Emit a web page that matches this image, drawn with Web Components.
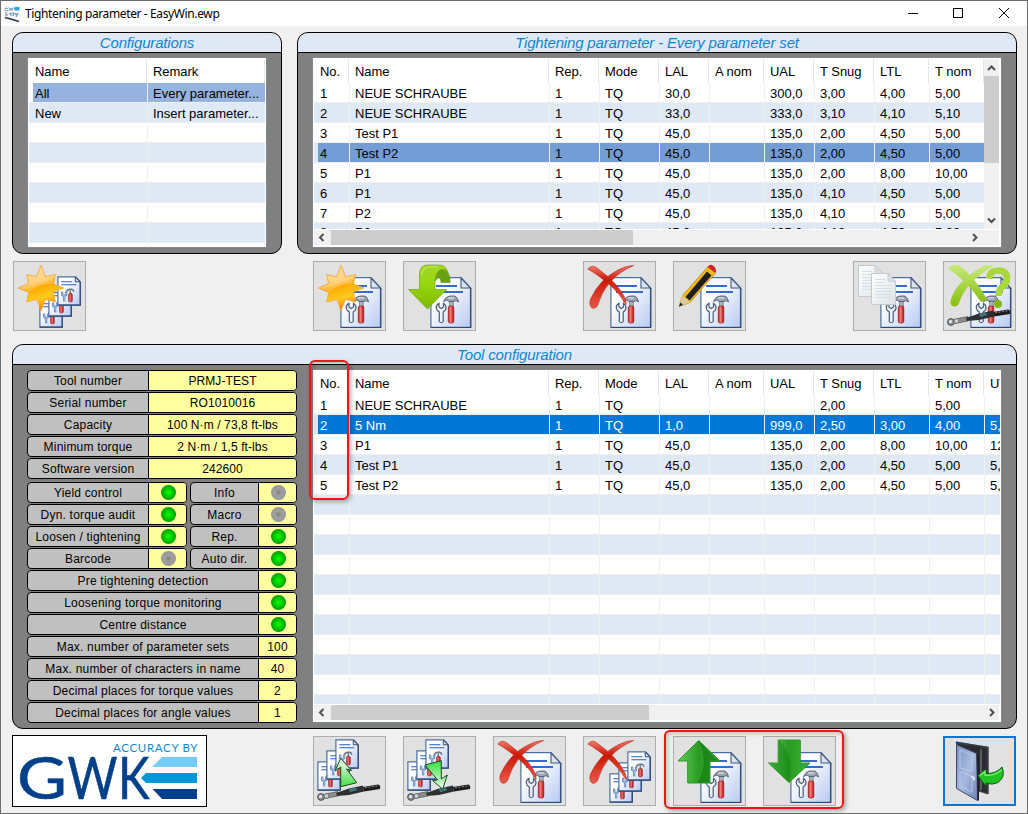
<!DOCTYPE html>
<html lang="en">
<head>
<meta charset="utf-8">
<title>Tightening parameter - EasyWin.ewp</title>
<style>
html,body{margin:0;height:100%;overflow:hidden}
body{font:13px "Liberation Sans",Arial,sans-serif;color:#000;background:#f0f0f0}
.top{display:flex;gap:15px;padding:6px 0 0 11px}
.bar{display:flex;gap:17px;padding:7px 0 0 12px}
.gap1{width:193px}.gap2{width:73px}
.tool{padding:13px 0 0 11px}
.cfg{display:flex;gap:16px}
.specs{display:flex;flex-direction:column;gap:1px;width:270px}
.pair{display:flex;gap:3px}
.flags{margin-top:2px;display:flex;flex-direction:column;gap:1px}
</style>
</head>
<body>
<ewp-window caption="Tightening parameter - EasyWin.ewp">
  <div class="top">
    <ewp-panel caption="Configurations" style="width:270px;height:222px">
      <ewp-table style="width:238px;height:189px" id="t1"></ewp-table>
    </ewp-panel>
    <ewp-panel caption="Tightening parameter - Every parameter set" style="width:720px;height:222px">
      <ewp-table style="width:688px;height:189px" id="t2"></ewp-table>
    </ewp-panel>
  </div>
  <div class="bar">
    <ewp-button icon="newset"></ewp-button><span class="gap1"></span>
    <ewp-button icon="new"></ewp-button><ewp-button icon="insert"></ewp-button><span class="gap2"></span>
    <ewp-button icon="delete"></ewp-button><ewp-button icon="edit"></ewp-button><span class="gap2"></span>
    <ewp-button icon="copy"></ewp-button><ewp-button icon="check"></ewp-button>
  </div>
  <div class="tool">
    <ewp-panel caption="Tool configuration" style="width:1005px;height:385px">
      <div class="cfg">
        <div class="specs">
          <ewp-spec label="Tool number" value="PRMJ-TEST" split="121"></ewp-spec>
          <ewp-spec label="Serial number" value="RO1010016" split="121"></ewp-spec>
          <ewp-spec label="Capacity" value="100 N·m / 73,8 ft-lbs" split="121"></ewp-spec>
          <ewp-spec label="Minimum torque" value="2 N·m / 1,5 ft-lbs" split="121"></ewp-spec>
          <ewp-spec label="Software version" value="242600" split="121"></ewp-spec>
          <div class="flags">
            <div class="pair"><ewp-spec label="Yield control" led="on" split="121" style="width:160px"></ewp-spec><ewp-spec label="Info" led="off" split="68" style="width:107px"></ewp-spec></div>
            <div class="pair"><ewp-spec label="Dyn. torque audit" led="on" split="121" style="width:160px"></ewp-spec><ewp-spec label="Macro" led="off" split="68" style="width:107px"></ewp-spec></div>
            <div class="pair"><ewp-spec label="Loosen / tightening" led="on" split="121" style="width:160px"></ewp-spec><ewp-spec label="Rep." led="on" split="68" style="width:107px"></ewp-spec></div>
            <div class="pair"><ewp-spec label="Barcode" led="off" split="121" style="width:160px"></ewp-spec><ewp-spec label="Auto dir." led="on" split="68" style="width:107px"></ewp-spec></div>
            <ewp-spec label="Pre tightening detection" led="on" split="231"></ewp-spec>
            <ewp-spec label="Loosening torque monitoring" led="on" split="231"></ewp-spec>
            <ewp-spec label="Centre distance" led="on" split="231"></ewp-spec>
            <ewp-spec label="Max. number of parameter sets" value="100" split="231"></ewp-spec>
            <ewp-spec label="Max. number of characters in name" value="40" split="231"></ewp-spec>
            <ewp-spec label="Decimal places for torque values" value="2" split="231"></ewp-spec>
            <ewp-spec label="Decimal places for angle values" value="1" split="231"></ewp-spec>
          </div>
        </div>
        <ewp-table style="width:688px;height:352px" id="t3"></ewp-table>
      </div>
    </ewp-panel>
  </div>
  <div class="bar" style="padding:6px 0 0 11px;gap:0">
    <ewp-logo></ewp-logo>
    <div class="bar" style="padding:1px 0 0 106px">
      <ewp-button icon="read"></ewp-button><ewp-button icon="write"></ewp-button>
      <ewp-button icon="delete"></ewp-button><ewp-button icon="deleteall"></ewp-button>
      <ewp-button icon="up"></ewp-button><ewp-button icon="down"></ewp-button><span class="gap2"></span>
      <ewp-button icon="exit" focused></ewp-button>
    </div>
  </div>
  <ewp-mark slot="marks" style="left:309px;top:360px;width:40px;height:140px"></ewp-mark>
  <ewp-mark slot="marks" style="left:664px;top:730px;width:180px;height:79px"></ewp-mark>
</ewp-window>
<script>
function shadow(el, html){ el.attachShadow({mode:'open'}).innerHTML = html; return el.shadowRoot; }

class EwpWindow extends HTMLElement{
  connectedCallback(){
    shadow(this, `<style>
      :host{display:flex;flex-direction:column;position:relative;box-sizing:border-box;width:1028px;height:814px;border:1px solid #6b6b6b;background:#f0f0f0}
      header{display:flex;align-items:center;height:25px;background:#fff;flex:none}
      .ico{margin-left:3px}
      h1{margin:0 auto 0 5px;font:12px/25px "Noto Sans","Open Sans",sans-serif;letter-spacing:-.38px;white-space:pre}
      .ctl{display:block}
    </style>
    <header>
      <svg class="ico" width="16" height="16" viewBox="0 0 16 16"><rect width="16" height="16" fill="#f4f7fa"/>
        <path d="M4 2.500Q1 1 .8 3.500T4 4.500V3.800M5 1.500l1 3 1-2.500 1 2.500 1-3" fill="none" stroke="#7f9fc4"/><path d="M11 1h4.500v3.600H11l-1.200-1.800z" fill="#2aa3e0"/>
        <path d="M1 7h2M1 9h3M5 8l2-1v3M8 7h2l-1 3M11 7l1 2 2-2-2 4" fill="none" stroke="#5c88b4"/><path d="M1 11.500l4 1 10 3" fill="none" stroke="#333" stroke-width="1.500"/></svg>
      <h1>${this.getAttribute('caption')}</h1>
      <svg class="ctl" width="120" height="25" viewBox="0 0 120 25" fill="none" stroke="#000" shape-rendering="crispEdges"><path d="M1 12.500h10M46.500 7.500h9v9h-9z"/><path d="M92 7l10 10M102 7l-10 10" shape-rendering="auto"/></svg>
    </header>
    <slot></slot><slot name="marks"></slot>`);
  }
}
class EwpPanel extends HTMLElement{
  connectedCallback(){
    shadow(this, `<style>
      :host{display:flex;flex-direction:column;box-sizing:border-box;border:1px solid #000;border-radius:11px;background:#808080;overflow:hidden}
      h2{margin:0;height:19px;flex:none;border-bottom:1px solid #000;background:#dfe9f5;color:#0f86cc;font:italic 15px/20px "Liberation Sans",Arial,sans-serif;letter-spacing:-.17px;text-align:center;white-space:pre}
      div{padding:5px 0 0 15px}
      :host([caption="Tool configuration"]) div{padding-left:14px}
    </style><h2>${this.getAttribute('caption')}</h2><div><slot></slot></div>`);
  }
}
class EwpTable extends HTMLElement{
  connectedCallback(){
    const d = TABLES[this.id];
    const cells = (r,t)=>d.widths.map((x,i)=>`<${t} style="width:${x}px">${r[i]||''}</${t}>`).join('');
    let rows='';
    for(let i=0;i<d.count;i++) rows += `<div class="row${d.sel===i?' sel':''}">${cells(d.rows[i]||[],'b')}</div>`;
    const arrow = p=>`<svg width="17" height="17" viewBox="0 0 17 17"><path d="${p}" fill="none" stroke="#505050" stroke-width="2"/></svg>`;
    shadow(this, `<style>
      :host{display:flex;flex-direction:column;box-sizing:border-box;background:#fff;padding:1px;font-size:13px;outline:1px solid #828790}
      .view{display:flex;flex:1;min-height:0}
      .grid{flex:1;min-width:0;overflow:hidden}
      .head,.row{display:flex}
      i,b{display:block;flex:none;box-sizing:border-box;font:inherit;white-space:pre;overflow:hidden}
      i{height:24px;line-height:25px;padding-left:6px;border-right:1px solid #e5e5e5;margin:0 1px 0 -1px;letter-spacing:-.03px}
      i:first-child{padding-left:7px}
      b{height:20px;line-height:21px;padding-left:5px;border-right:1px solid #f0f0f0;border-bottom:1px solid #f0f0f0}
      b:first-child{padding-left:6px}
      .row{--base:#fff}
      .row:nth-child(odd){--base:#dfe9f5;background:#dfe9f5}
      .row.sel b{background:${d.color};color:${d.ink}}
      .row.sel b:first-child{background:linear-gradient(90deg,var(--base) 4px,${d.color} 4px)}
      .cut b{line-height:19px}
      .v{width:16px;background:linear-gradient(90deg,#f0f0f0 15px,#fff 15px);display:flex;flex-direction:column}
      .v svg{margin-left:-1px}
      .v em{height:87px;width:15px;background:#cdcdcd}
      .v svg:last-child{margin-top:auto}
      .h{margin:1px 1px 1px 0;height:15px;background:#f0f0f0;display:flex}
      .h em{background:#cdcdcd;height:15px}
      .h svg{margin:-1px 0 0 -1px}
      .h em{margin-left:1px}
      .h svg:last-child{margin-left:auto;margin-right:${d.v?15:-2}px}
    </style>
    <div class="view"><div class="grid"><div class="head">${cells(d.cols,'i')}</div>${rows}</div>
    ${d.v?`<div class="v">${arrow('M5 11l3.5-3.5L12 11')}<em></em>${arrow('M5 6.5L8.5 10 12 6.5')}</div>`:''}</div>
    ${d.h?`<div class="h">${arrow('M10.5 5L7 8.5l3.5 3.5')}<em style="width:${d.h}px"></em>${arrow('M6 5l3.5 3.5L6 12')}</div>`:''}`);
    if(d.v) this.shadowRoot.querySelector('.grid').lastElementChild.classList.add('cut');
  }
}
class EwpSpec extends HTMLElement{
  connectedCallback(){
    const led=this.getAttribute('led');
    const c = led==='on'?['#00ff00','#00d000','#009a00']:['#808080','#a0a0a0','#979797'];
    shadow(this, `<style>
      :host{display:flex;box-sizing:border-box;width:270px;height:21px;border:1px solid #000;border-radius:4px;overflow:hidden;background:#c0c0c0;font-size:12px;line-height:21px;letter-spacing:.2px;white-space:pre;text-align:center}
      .l{width:${this.getAttribute('split')-1}px;flex:none;border-right:1px solid #000}
      .r{flex:1;height:19px;background:#ffff9f;letter-spacing:.1px}
      svg{display:block;margin:2px auto 0;position:relative;left:.5px}
    </style><div class="l">${this.getAttribute('label')}</div>
    <div class="r">${led?`<svg width="15" height="15"><defs><radialGradient id="g"><stop offset="0" stop-color="${c[0]}"/><stop offset=".5" stop-color="${c[1]}"/><stop offset="1" stop-color="${c[2]}"/></radialGradient></defs><circle cx="7.500" cy="7.500" r="7.500" fill="url(#g)"/></svg>`:this.getAttribute('value')}</div>`);
  }
}
class EwpMark extends HTMLElement{
  connectedCallback(){
    shadow(this, `<style>:host{display:block;position:absolute;margin:-1px 0 0 -1px;box-sizing:border-box;border:2px solid #f21414;border-radius:6px;box-shadow:2px 2px 4px rgba(0,0,0,.3),inset 2px 2px 4px rgba(0,0,0,.18)}</style>`);
  }
}
class EwpLogo extends HTMLElement{
  connectedCallback(){
    shadow(this, `<style>:host{display:block;box-sizing:border-box;width:195px;height:72px;border:1px solid #000;background:#fff}svg{display:block}</style>
    <svg width="193" height="70" viewBox="13 736 193 70">
      <text x="113" y="751.500" font-family="Lato" font-size="11.500" fill="#1787cb" textLength="84.500">ACCURACY BY</text>
      <g font-family="Lato" font-size="58" fill="#00408a" stroke="#00408a" stroke-width=".6">
      <text x="17" y="799" textLength="50" lengthAdjust="spacingAndGlyphs">G</text>
      <text x="67.500" y="799" textLength="50" lengthAdjust="spacingAndGlyphs">W</text>
      <text x="118" y="799" textLength="31.500" lengthAdjust="spacingAndGlyphs">K</text></g>
      <path d="M162 757h35v10h-45z" fill="#74cbf5"/><path d="M146 773h51v10h-51l-5-5z" fill="#0096d8"/><path d="M152.500 789h44.500v10h-35z" fill="#00408a"/>
    </svg>`);
  }
}

const DEFS = `<defs>
<linearGradient id="pg" x1="0" y1="0" x2="1" y2="1"><stop offset=".3" stop-color="#fff"/><stop offset="1" stop-color="#b8caf2"/></linearGradient>
<linearGradient id="st" x1="0" y1="0" x2=".3" y2="1"><stop offset="0" stop-color="#ffe0a0"/><stop offset=".45" stop-color="#ffc860"/><stop offset=".55" stop-color="#ffa800"/><stop offset=".8" stop-color="#ffcb1e"/><stop offset="1" stop-color="#f58a10"/></linearGradient>
<linearGradient id="rd" x1="0" y1="0" x2="0" y2="1"><stop offset="0" stop-color="#f07a6c"/><stop offset=".35" stop-color="#cc1806"/><stop offset="1" stop-color="#ea5a4a"/></linearGradient>
<linearGradient id="rh"><stop offset="0" stop-color="#c81818"/><stop offset=".4" stop-color="#f08078"/><stop offset="1" stop-color="#b00c0c"/></linearGradient>
<linearGradient id="lg" x1="0" y1="0" x2="0" y2="1"><stop offset="0" stop-color="#a2d624"/><stop offset=".4" stop-color="#98d810"/><stop offset="1" stop-color="#7fb800"/></linearGradient>
<linearGradient id="yg" x1="0" y1="0" x2="0" y2="1"><stop offset="0" stop-color="#c8ea7c"/><stop offset="1" stop-color="#88bf10"/></linearGradient>
<linearGradient id="gg"><stop offset="0" stop-color="#62d05a"/><stop offset=".5" stop-color="#2a9a24"/><stop offset="1" stop-color="#3cb434"/></linearGradient>
<linearGradient id="ag" x1="0" y1="0" x2="0" y2="1"><stop offset="0" stop-color="#f0fbf0"/><stop offset=".4" stop-color="#b8efb8"/><stop offset="1" stop-color="#3fe03f"/></linearGradient>
<linearGradient id="bg" x1="0" y1="0" x2="0" y2="1"><stop offset="0" stop-color="#30e03a"/><stop offset="1" stop-color="#f4fcf4"/></linearGradient>
<linearGradient id="dr" x1="0" y1="0" x2="1" y2="1"><stop offset="0" stop-color="#7890c0"/><stop offset=".5" stop-color="#a8bae0"/><stop offset="1" stop-color="#7084b4"/></linearGradient>
<linearGradient id="cp" x1="0" y1="0" x2="1" y2="1"><stop offset="0" stop-color="#fff"/><stop offset="1" stop-color="#dfe4e6"/></linearGradient>
</defs>`;
const TOOLS = `<path d="M36 42.300Q33 44 33.300 47Q33.800 50 36.300 51V60.500Q38.200 63 40.200 60.500V51Q43 49.500 43 46.500Q43 44 40.500 42.300V46L38.200 47.500L36 46z" fill="#eef2f8" stroke="#4b5c78" stroke-width="1.200"/>
<path d="M46.500 40h3.800v6h-3.800z" fill="#a9b4c0" stroke="#56626e" stroke-width=".6"/>
<path d="M40.500 40.500Q43 35 47 35h5Q55 36.500 55.500 41L53 39.500 51 40.500H46L44 39z" fill="#9ba6b2" stroke="#4a545e" stroke-width=".8"/><path d="M45 37h6" stroke="#eef"/>
<rect x="45.300" y="45" width="5.500" height="17" rx="1.800" fill="url(#rh)" stroke="#a01414" stroke-width=".7"/>`;
const DOC = `<path d="M27.900 16.600H58L67.500 27V66.300H27.900z" fill="url(#pg)" stroke="#4d6f9f" stroke-width="1.200"/><path d="M67.800 27V66.500H28" fill="none" stroke="#2c4a78" stroke-width="1.200"/><path d="M58 17V27H67.500z" fill="#dce4ee" stroke="#405a80" stroke-width="1.100"/><path d="M33 25h21M33 31h27" stroke="#356ad2" stroke-width="2"/>${TOOLS}`;
const small = (x,y)=>`<g transform="translate(${x} ${y})"><path d="M.6.600H18.500L22.900 5.500V28.800H.6z" fill="url(#pg)" stroke="#4d6f9f" stroke-width="1.200"/><path d="M23 5.500V28.900H.6" fill="none" stroke="#2c4a78" stroke-width="1.200"/><path d="M18 1V5.500H22.700z" fill="#dce4ee" stroke="#304a70"/><path d="M4 5.500h11M4 8.500h15" stroke="#2560c0" stroke-width="1.100"/>
<path d="M4.800 15.500v3l2 1.500 2-1.500v-3M6.800 20v5" fill="none" stroke="#4a70b0" stroke-width="2.200"/><path d="M4.800 16v2.500l2 1.500 2-1.500V16M6.800 20v4.500" fill="none" stroke="#dbe8fa" stroke-width=".8"/><path d="M9 15.500q1-2.500 4-2.500h1.500q1.700.4 2 2.500M13 14v4" fill="none" stroke="#6a7480" stroke-width="1.500"/><rect x="11.300" y="17.300" width="3.700" height="8.200" rx="1" fill="url(#rh)" stroke="#9c1212" stroke-width=".6"/></g>`;
const SET = small(26.3,37.3)+small(35.3,26.3)+small(44.3,15.3);
const SETL = small(4.3,25.3)+small(13.3,14.3)+small(22.3,3.3);
const STAR = `<path d="M28 4L32.500 15.500 42.500 13.500 40.500 23 51 27 40.500 31 42.500 41 32.500 38.500 28 50 24 38.500 13.500 41 15.800 31.500 5 27 15.500 22.500 13.500 13.500 23.500 15.500z" fill="url(#st)" stroke="#f0a040" stroke-width=".7"/><path d="M16.500 31Q26 23 39 23L41 15 32 17 28 8 24 17 15 15 17 23.500 8 27z" fill="#fff" opacity=".2"/>`;
const CROSS = `<path d="M4.800 8Q9 3 14 7Q35 22 42 37Q43.500 41 43 43.500Q37 33 28 25Q14 13 4.800 8z" fill="url(#rd)" stroke="#c02818" stroke-width=".6"/><path d="M50.500 4.500Q36 11 27 21Q18 32 14.800 44Q13 48 9 47Q5.500 44 7.500 38Q17 18 34 9.500Q43 4.500 50.500 4.500z" fill="url(#rd)" stroke="#c02818" stroke-width=".6"/>`;
const wrench = y=>`<g transform="translate(0 ${y})"><path d="M12 57.500L25 55V59.500L12 62z" fill="#8a8e90" stroke="#444" stroke-width=".6"/><circle cx="8" cy="60.500" r="3.400" fill="#8e9294" stroke="#3a3a3a" stroke-width=".8"/><circle cx="7.500" cy="60" r="1.500" fill="#eee"/><path d="M11 58l4-1 .8 4-4 1z" fill="#d0d3d4" stroke="#555" stroke-width=".6"/><path d="M23 56.500L36 52l14-3 1 6-15 3.500-12 1z" fill="#2c3032"/><path d="M36 52.500l7-1.800 1 3-7 2z" fill="#3f7180"/><path d="M50 50.500L65 48Q68 48.500 67 52.500L51 55z" fill="#1c1c1c"/><path d="M52 51.300l13-2" stroke="#888" stroke-dasharray="2 1.500"/></g>`;
const ICONS = {
 newset: SET+STAR, new: DOC+STAR,
 insert: DOC+`<path d="M32.500 20Q34 8 39 6Q47 9 47.200 21.500H38Q37.500 15 34.500 17z" fill="#6ba010" stroke="#5f930a" stroke-width=".6"/><path d="M32 28.500V19Q32.500 11 38 8.500Q42 7.500 44.500 11Q43 4 36 4H24Q16.500 4 16.500 14V28.500H5.500L24.500 48 43.500 28.500z" fill="url(#lg)" stroke="#73a80a" stroke-width=".7"/><path d="M18.500 14Q19 7 25 6h10" fill="none" stroke="#c5ea70" stroke-width="1.200"/>`,
 delete: DOC+CROSS, deleteall: SET+CROSS,
 edit: DOC+`<path d="M6 45.500L9.500 34.500 35 5.500 42.500 12 17 41.500z" fill="#f2b81c" stroke="#a47812" stroke-width=".6"/><path d="M12.500 36L34 10.500 38.500 14.500 16.500 39.500z" fill="#202020"/><path d="M34.500 6Q37 2.500 40 4.500 44 7 42.500 12z" fill="#d41f26"/><path d="M6 45.500L9.500 34.500 17 41.500z" fill="#dccb98"/><path d="M6 45.500L7.500 41.500 10 44z" fill="#222"/>`,
 copy: DOC+[[5,4],[18,12]].map(([x,y])=>`<g transform="translate(${x} ${y})"><path d="M.5.500H17L24.500 8.500V31.500H.5z" fill="url(#cp)" stroke="#c4c9cc"/><path d="M17 .5V8.500H24.500z" fill="#dde1e4" stroke="#b8bec2" stroke-width=".6"/><path d="M4 6.500h10M4 9.500h10M4 12.500h17M4 15.500h17M4 18.500h17M4 21.500h17M4 24.500h17" stroke="#cfe0ea" stroke-width="1"/></g>`).join(''),
 check: DOC+`<path d="M4.500 7Q10 3 16 4Q32 16 44.500 39L38 41Q24 20 4.500 7z" fill="url(#yg)"/><path d="M51.500 4H42Q14 19 8 38 6 45 11 45.500 15 45.500 16 42Q22 22 51.500 4z" fill="url(#yg)"/><path d="M46 17.500Q47 9.500 55 9.500 64 9.500 64 17.500 64 22.500 59 26 55.500 29 55.500 35" fill="none" stroke="#a9d83c" stroke-width="6.500"/><circle cx="55" cy="43" r="4" fill="#82b911"/>`+wrench(.5),
 read: SETL+wrench(.5)+`<path d="M27.700 22.300L38.700 34.500 33.500 33 43.700 46.700 27.700 50.700V31L22 35z" fill="url(#ag)" stroke="#1c4a1c"/>`,
 write: SETL+wrench(.5)+`<path d="M22 29L38.300 24.700V43L44.300 39 39.700 53 29.700 44.700 34.500 44z" fill="url(#bg)" stroke="#1c4a1c"/>`,
 up: DOC+`<path d="M25.700 4.500L47 25H37V47H14.700V25H5z" fill="url(#gg)" stroke="#2a9a24"/><path d="M25.700 5Q36 25 25 46.500H36.500V24.500H45.500z" fill="#0c6e0c" opacity=".5"/>`,
 down: DOC+`<path d="M15.200 4H37.300V27H47L26 46.500 5.500 27H15.200z" fill="url(#gg)" stroke="#2a9a24"/><path d="M16 4.500Q32 18 26 46L6.500 27.500H15.700z" fill="#0b7a0b" opacity=".4"/>`,
 exit: `<path d="M13 6L44.700 11.500V58L35 55V64z" fill="#2a2b30" stroke="#555" stroke-width=".8"/><path d="M13 6.500L44.700 11.500V58" fill="none" stroke="#3a3c40" stroke-width="2"/><path d="M38 13v41" stroke="#5b5e63" stroke-width="2"/><path d="M13.500 8.500L33.700 17.500 34.500 64.500 13.500 52.500z" fill="url(#dr)" stroke="#3c4868"/><path d="M33.700 17.500l2.300 1V64.500H34.500" fill="#202228"/><path d="M17 14L29 19.500V35.500L17 32zM17 36L29 40V56L17 49.500z" fill="none" stroke="#c2d0ee" stroke-width=".8"/><path d="M28 40.500l3 1v3" stroke="#eee" stroke-width="1.500" fill="none"/><path d="M34.700 39.500L43 33V37.500Q53 38 59 31Q63 41 55 46.500 49 49.500 43 47V50.500z" fill="#1fc324" stroke="#0e5a10"/><path d="M37 39.300L42 35.500V39Q52 40 58.500 34" stroke="#79ee72" stroke-width="1.500" fill="none"/>`
};
class EwpButton extends HTMLElement{
  connectedCallback(){
    const f=this.hasAttribute('focused');
    shadow(this, `<style>:host{display:block;flex:none;box-sizing:border-box;width:73px;height:70px;background:#e1e1e1;box-shadow:inset 0 0 0 ${f?'2px #0078d7':'1px #adadad'}}svg{display:block}</style>
    <svg width="73" height="70" viewBox="0 0 73 70">${DEFS}${ICONS[this.getAttribute('icon')]}</svg>`);
  }
}
const W=[36,200,50,60,50,55,50,60,55,55];
const C=['No.','Name','Rep.','Mode','LAL','A nom','UAL','T Snug','LTL','T nom'];
const TABLES={
 t1:{cols:['Name','Remark'],widths:[119,118],count:9,sel:0,color:'#96b2df',ink:'#000',rows:[['All','Every parameter...'],['New','Insert parameter...']]},
 t2:{cols:C,widths:W,count:8,sel:3,color:'#749dd6',ink:'#000',v:1,h:302,rows:[
  ['1','NEUE SCHRAUBE','1','TQ','30,0','','300,0','3,00','4,00','5,00'],
  ['2','NEUE SCHRAUBE','1','TQ','33,0','','333,0','3,10','4,10','5,10'],
  ['3','Test P1','1','TQ','45,0','','135,0','2,00','4,50','5,00'],
  ['4','Test P2','1','TQ','45,0','','135,0','2,00','4,50','5,00'],
  ['5','P1','1','TQ','45,0','','135,0','2,00','8,00','10,00'],
  ['6','P1','1','TQ','45,0','','135,0','4,10','4,50','5,00'],
  ['7','P2','1','TQ','45,0','','135,0','4,10','4,50','5,00'],
  ['8','P2','1','TQ','45,0','','135,0','4,10','4,50','5,00']]},
 t3:{cols:[...C,'UTL'],widths:[...W,55],count:16,sel:1,color:'#0078d7',ink:'#fff',h:318,rows:[
  ['1','NEUE SCHRAUBE','1','TQ','','','','2,00','','5,00',''],
  ['2','5 Nm','1','TQ','1,0','','999,0','2,50','3,00','4,00','5,00'],
  ['3','P1','1','TQ','45,0','','135,0','2,00','8,00','10,00','12,00'],
  ['4','Test P1','1','TQ','45,0','','135,0','2,00','4,50','5,00','5,50'],
  ['5','Test P2','1','TQ','45,0','','135,0','2,00','4,50','5,00','5,50']]}
};
customElements.define('ewp-window',EwpWindow);
customElements.define('ewp-panel',EwpPanel);
customElements.define('ewp-table',EwpTable);
customElements.define('ewp-spec',EwpSpec);
customElements.define('ewp-mark',EwpMark);
customElements.define('ewp-logo',EwpLogo);
customElements.define('ewp-button',EwpButton);
</script>
</body>
</html>
